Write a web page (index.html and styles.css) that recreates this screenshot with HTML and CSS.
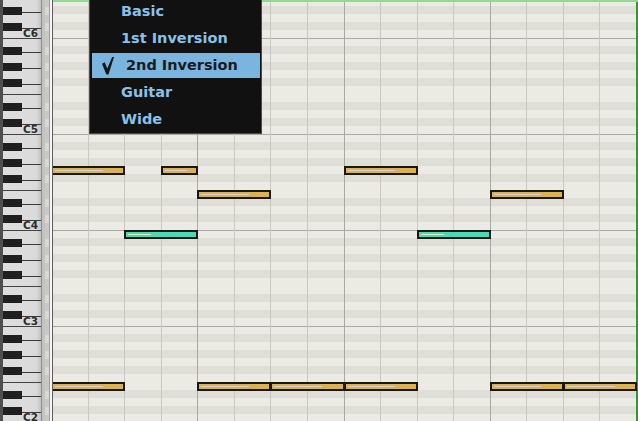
FILE: index.html
```html
<!DOCTYPE html>
<html lang="en">
<head>
<meta charset="utf-8">
<title>Piano Roll</title>
<link rel="stylesheet" href="styles.css">
</head>
<body>
<div class="app">
  <div class="piano">
    <div class="keys">
      <div class="key"></div>
      <div class="key blk"></div>
      <div class="key"></div>
      <div class="key blk"></div>
      <div class="key c"><span>C6</span></div>

      <div class="key"></div>
      <div class="key blk"></div>
      <div class="key"></div>
      <div class="key blk"></div>
      <div class="key"></div>
      <div class="key blk"></div>
      <div class="key f"></div>
      <div class="key"></div>
      <div class="key blk"></div>
      <div class="key"></div>
      <div class="key blk"></div>
      <div class="key c"><span>C5</span></div>

      <div class="key"></div>
      <div class="key blk"></div>
      <div class="key"></div>
      <div class="key blk"></div>
      <div class="key"></div>
      <div class="key blk"></div>
      <div class="key f"></div>
      <div class="key"></div>
      <div class="key blk"></div>
      <div class="key"></div>
      <div class="key blk"></div>
      <div class="key c"><span>C4</span></div>

      <div class="key"></div>
      <div class="key blk"></div>
      <div class="key"></div>
      <div class="key blk"></div>
      <div class="key"></div>
      <div class="key blk"></div>
      <div class="key f"></div>
      <div class="key"></div>
      <div class="key blk"></div>
      <div class="key"></div>
      <div class="key blk"></div>
      <div class="key c"><span>C3</span></div>

      <div class="key"></div>
      <div class="key blk"></div>
      <div class="key"></div>
      <div class="key blk"></div>
      <div class="key"></div>
      <div class="key blk"></div>
      <div class="key f"></div>
      <div class="key"></div>
      <div class="key blk"></div>
      <div class="key"></div>
      <div class="key blk"></div>
      <div class="key c"><span>C2</span></div>
    </div>
  </div>

  <div class="strip"></div>

  <div class="roll">
    <div class="beats">
      <div class="beat bar"></div><div class="beat"></div><div class="beat"></div><div class="beat"></div>
      <div class="beat bar"></div><div class="beat"></div><div class="beat"></div><div class="beat"></div>
      <div class="beat bar"></div><div class="beat"></div><div class="beat"></div><div class="beat"></div>
      <div class="beat bar"></div><div class="beat"></div><div class="beat"></div><div class="beat"></div>
    </div>
    <div class="notes">
      <div class="note" style="grid-area: 22 / 1 / span 1 / span 2"></div>
      <div class="note" style="grid-area: 22 / 4 / span 1 / span 1"></div>
      <div class="note" style="grid-area: 25 / 5 / span 1 / span 2"></div>
      <div class="note" style="grid-area: 22 / 9 / span 1 / span 2"></div>
      <div class="note" style="grid-area: 25 / 13 / span 1 / span 2"></div>
      <div class="note alt" style="grid-area: 30 / 3 / span 1 / span 2"></div>
      <div class="note alt" style="grid-area: 30 / 11 / span 1 / span 2"></div>
      <div class="note" style="grid-area: 49 / 1 / span 1 / span 2"></div>
      <div class="note" style="grid-area: 49 / 5 / span 1 / span 2"></div>
      <div class="note" style="grid-area: 49 / 7 / span 1 / span 2"></div>
      <div class="note" style="grid-area: 49 / 9 / span 1 / span 2"></div>
      <div class="note" style="grid-area: 49 / 13 / span 1 / span 2"></div>
      <div class="note" style="grid-area: 49 / 15 / span 1 / span 2"></div>
    </div>
  </div>

  <div class="menu">
    <div class="item">Basic</div>
    <div class="item">1st Inversion</div>
    <div class="item sel"><svg class="check" width="12" height="18" viewBox="0 0 12 18"><path d="M0 6.8 L2.7 5.2 L5.3 11.4 L10.2 0 L12 0 L6.5 17.6 L4.4 17.6 Z"/></svg>2nd Inversion</div>
    <div class="item">Guitar</div>
    <div class="item">Wide</div>
  </div>
</div>
</body>
</html>
```

FILE: styles.css
```css
html, body {
  margin: 0;
  padding: 0;
  background: #eae9e3;
  overflow: hidden;
}

.app {
  position: relative;
  display: flex;
  width: 638px;
  height: 421px;
  overflow: hidden;
}

/* ---------- piano keyboard ---------- */
.piano {
  flex: none;
  width: 38px;
  border-left: 3px solid #4f4f4f;
  background: linear-gradient(to right, #dedede 0, #dadada 88%, #c2c2c2 100%);
  overflow: hidden;
}

.keys {
  margin-top: -1px;
}

.key {
  position: relative;
  box-sizing: border-box;
  height: 8px;
}

.key.blk::before {
  content: "";
  position: absolute;
  left: 0;
  top: 0;
  width: 19px;
  height: 8px;
  background: #1f1f1f;
}

.key.blk::after {
  content: "";
  position: absolute;
  left: 19px;
  right: 0;
  top: 5px;
  height: 1px;
  background: #3c3c3c;
}

.key.c,
.key.f {
  border-bottom: 1px solid #444;
}

.key.c span {
  display: block;
  text-align: right;
  padding-right: 3px;
  font: bold 10.5px/4px "DejaVu Sans", sans-serif;
  color: #2c2c2c;
}

/* ---------- separator strip ---------- */
.strip {
  flex: none;
  width: 12px;
  background-image:
    linear-gradient(to bottom,
      transparent 0 8px, #d8d8d4 8px 16px,
      transparent 16px 24px, #d8d8d4 24px 32px,
      transparent 32px 40px, #d8d8d4 40px 48px,
      transparent 48px 64px, #d8d8d4 64px 72px,
      transparent 72px 80px, #d8d8d4 80px 88px,
      transparent 88px 96px),
    linear-gradient(to right,
      #8c8c8c 0 1px, #c2c2be 1px 4px, #c8c8c4 4px 8px,
      #9e9e9e 8px 9px, #f6f6f6 9px 11px, #5c5c5c 11px 12px);
  background-size: 4px 96px, 100% 100%;
  background-position: 4px 39px, 0 0;
  background-repeat: repeat-y, no-repeat;
}

/* ---------- note grid ---------- */
.roll {
  flex: 1;
  display: grid;
  grid-template-columns: minmax(0, 1fr);
  grid-template-rows: minmax(0, 1fr);
  padding-right: 2px;
  overflow: hidden;
  background-image: linear-gradient(to bottom,
    #a8a8a4 0 1px,
    #ebeae4 1px 8px, #dfded7 8px 16px,
    #ebeae4 16px 24px, #dfded7 24px 32px,
    #ebeae4 32px 40px, #dfded7 40px 48px,
    #ebeae4 48px 64px, #dfded7 64px 72px,
    #ebeae4 72px 80px, #dfded7 80px 88px,
    #ebeae4 88px 96px);
  background-size: 100% 96px;
  background-position: 0 38px;
  box-shadow: inset 0 2px 0 #8fdb8f, inset -2px 0 0 #2a9e2a;
}

/* the bar grid begins just under the strip's edge */
.beats,
.notes {
  grid-area: 1 / 1;
  margin-left: -2px;
  display: grid;
  grid-template-columns: repeat(16, 1fr);
}

.beats {
  margin-top: 2px;
}

.beat {
  border-left: 1px solid #c9c9c3;
}

.beat.bar {
  border-left-color: #a9a9a5;
}

.notes {
  grid-template-rows: 6px repeat(52, 8px);
}

.note {
  box-sizing: border-box;
  margin: 0 -1px -1px 0;
  border: 2px solid #171717;
  background: #dcb14f;
  display: flex;
  align-items: center;
  padding-left: 2px;
}

.note::after {
  content: "";
  width: 70%;
  height: 1px;
  background: #d6d3c8;
}

.note.alt {
  background: #4fd8b7;
}

.note.alt::after {
  width: 34%;
  background: #d4f2bd;
}

/* ---------- chord menu ---------- */
.menu {
  position: absolute;
  left: 89px;
  top: -3px;
  width: 168px;
  padding: 1px 1px 1px 2px;
  border: 1px solid #4a4a4a;
  background: #111111;
  display: flex;
  flex-direction: column;
  gap: 2px;
}

.item {
  display: flex;
  align-items: center;
  height: 25px;
  padding-left: 29px;
  font: bold 14.5px/25px "DejaVu Sans", sans-serif;
  color: #88c2ea;
  white-space: nowrap;
}

.item.sel {
  padding-left: 10px;
  background: #79b5de;
  color: #1b1b1b;
}

.check {
  flex: none;
  margin-right: 12px;
  fill: #161616;
}
```
